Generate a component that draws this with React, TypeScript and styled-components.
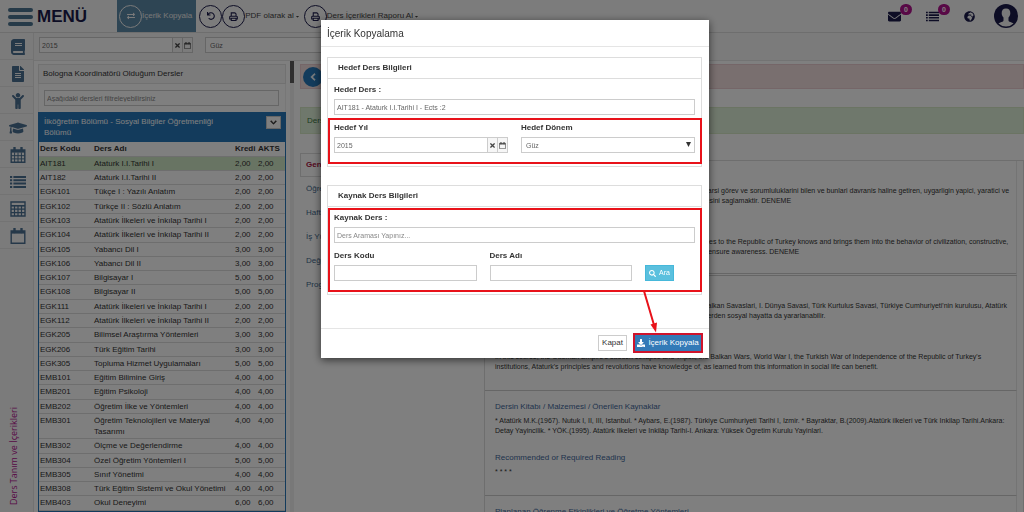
import React from "react";
import styled, { createGlobalStyle, css } from "styled-components";
import {
  FaBook,
  FaCaretDown,
  FaChevronDown,
  FaChevronLeft,
  FaChild,
  FaDownload,
  FaEnvelope,
  FaExchangeAlt,
  FaFileAlt,
  FaGlobeAfrica,
  FaGraduationCap,
  FaSearch,
  FaTimes,
  FaUndo,
} from "react-icons/fa";

const GlobalStyle = createGlobalStyle`
  * { box-sizing: border-box; }
  body {
    margin: 0;
    font-family: "Liberation Sans", Arial, sans-serif;
    font-size: 8px;
    line-height: 10px;
    color: #333;
    background: #fff;
  }
  button, input, select { font: inherit; color: inherit; border-radius: 0; margin: 0; }
  a { color: inherit; text-decoration: none; }
`;

const Shell = styled.div`
  display: flex;
  flex-direction: column;
  height: 100vh;
  overflow: hidden;
`;

/* ---------- top bar ---------- */

const TopBar = styled.header`
  display: flex;
  flex: none;
  align-items: center;
  height: 33px;
  padding: 0 6px 0 8px;
  background: #f9f9f9;
  border-bottom: 1px solid #dcdcdc;
`;

const MenuButton = styled.button`
  display: flex;
  align-items: center;
  gap: 4px;
  width: 109px;
  padding: 2px 0 0;
  border: 0;
  background: none;
  color: #1b1b4b;
  font-size: 17px;
  font-weight: bold;
  line-height: 20px;
`;

const Bars = styled.span`
  display: grid;
  gap: 3px;
  width: 25px;

  i {
    height: 4px;
    border-radius: 2px;
    background: #4d7591;
  }
`;

const ToolButton = styled.button<{ $active?: boolean }>`
  display: flex;
  align-items: center;
  height: 32px;
  padding: 0;
  border: 0;
  background: none;
  color: #444;
  white-space: nowrap;

  ${(p) =>
    p.$active &&
    css`
      padding: 0 4px 0 2px;
      margin-right: 3px;
      background: #5d8aa8;
      color: #eee;
    `}
`;

const Ring = styled.span<{ $light?: boolean }>`
  display: grid;
  place-items: center;
  width: 23px;
  height: 23px;
  border: 1px solid ${(p) => (p.$light ? "#f4f4f4" : "#1b1b4b")};
  border-radius: 50%;
  color: ${(p) => (p.$light ? "#f4f4f4" : "#1b1b4b")};
  font-size: 8px;
`;

const ToolGroup = styled.div`
  display: flex;
  align-items: center;

  & > :nth-child(3) {
    margin-left: 4px;
  }
`;

const Caret = styled(FaCaretDown)`
  font-size: 5px;
  margin-left: 1px;
`;

const Status = styled.nav`
  display: flex;
  align-items: center;
  gap: 19px;
  margin-left: auto;
  color: #1b1b4b;
`;

const StatusIcons = styled.div`
  display: flex;
  align-items: center;
  gap: 25px;
`;

const StatusLink = styled.a`
  position: relative;
  display: flex;
  font-size: 13px;
`;

const Badge = styled.span`
  position: absolute;
  left: 12px;
  top: -6px;
  width: 12px;
  height: 11px;
  border-radius: 6px;
  background: #b0128c;
  color: #fff;
  font-size: 7px;
  font-weight: bold;
  line-height: 11px;
  text-align: center;
`;

/* ---------- side navigation ---------- */

const Body = styled.div`
  display: flex;
  flex: 1;
  min-height: 0;
`;

const Side = styled.nav`
  display: flex;
  flex: none;
  flex-direction: column;
  width: 34px;
  background: #f7f7f7;
  border-right: 1px solid #e4e4e4;
`;

const SideLink = styled.a`
  display: grid;
  place-items: center;
  height: 27px;
  padding: 1px 0 0 3px;
  border-bottom: 1px solid #e6e6e6;
  color: #4b7092;
  font-size: 16px;
`;

const SideCaption = styled.span`
  margin: auto 0 7px 8px;
  writing-mode: vertical-rl;
  transform: rotate(180deg);
  align-self: flex-start;
  color: #b0128c;
  font-family: "Open Sans", sans-serif;
  font-size: 9px;
  line-height: 12px;
  white-space: nowrap;
`;

const Main = styled.div`
  display: flex;
  flex: 1;
  flex-direction: column;
  min-width: 0;
`;

/* ---------- form controls ---------- */

const TextInput = styled.input`
  display: block;
  flex: 1;
  width: 100%;
  min-width: 0;
  height: 16px;
  padding: 0 2px;
  border: 1px solid #ccc;
  background: #fff;
  color: #666;
  font-size: 7px;
  outline: 0;

  &::placeholder {
    color: #888;
    opacity: 1;
  }
`;

const InputRow = styled.div`
  display: flex;
`;

const AddOn = styled.button`
  display: grid;
  place-items: center;
  width: 11px;
  height: 16px;
  padding: 0;
  margin-left: -1px;
  border: 1px solid #ccc;
  background: #f6f6f6;
  color: #444;
  font-size: 7px;
`;

const SelectWrap = styled.span`
  position: relative;
  display: block;
  flex: 1;

  svg {
    position: absolute;
    right: 4px;
    top: 5px;
    pointer-events: none;
  }
`;

const Select = styled.select`
  display: block;
  appearance: none;
  width: 100%;
  height: 16px;
  padding: 1px 4px 0;
  border: 1px solid #ccc;
  background: #fff;
  color: #666;
  font-size: 7px;
`;

const FilterBar = styled.div`
  display: flex;
  flex: none;
  gap: 12px;
  height: 28px;
  padding: 4px 5px;
  background: #f7f7f7;
  border-bottom: 1px solid #e6e6e6;
`;

const FilterCell = styled.div`
  width: 154px;
`;

/* ---------- course list ---------- */

const Columns = styled.div`
  display: flex;
  flex: 1;
  min-height: 0;
  background: #fff;
`;

const ListColumn = styled.section`
  flex: none;
  width: 260px;
  padding: 3px 4px 0 4px;
  border-right: 4px solid #f0f0f0;
  position: relative;
`;

const ScrollThumb = styled.i`
  position: absolute;
  right: -4px;
  top: 0;
  width: 4px;
  height: 22px;
  background: #5e5e5e;
`;

const ListHeading = styled.h2`
  margin: 0;
  padding: 3px 4px 4px;
  border: 1px solid #e2e2e2;
  background: #f7f7f7;
  font-size: 8px;
  font-weight: normal;
  line-height: 11px;
`;

const ListFilter = styled.div`
  padding: 6px 6px 6px 5px;
  border: 1px solid #eee;
  border-width: 0 1px;
`;

const CourseBox = styled.div`
  border: 1px solid #2777b8;
`;

const CourseBoxHead = styled.div`
  display: flex;
  justify-content: space-between;
  align-items: flex-start;
  height: 29px;
  padding: 3px 4px 0 5px;
  background: #2777b8;
  color: #fff;
  line-height: 11px;
`;

const Collapse = styled.button`
  display: grid;
  place-items: center;
  width: 15px;
  height: 13px;
  padding: 0;
  border: 1px solid #ccc;
  background: #fff;
  color: #333;
  font-size: 7px;

  path {
    stroke: currentColor;
    stroke-width: 30px;
  }
`;

const CourseTable = styled.table`
  width: 100%;
  border-collapse: collapse;
  table-layout: fixed;

  th,
  td {
    height: 14px;
    padding: 1px;
    border-bottom: 1px solid #ddd;
    text-align: left;
    vertical-align: top;
    line-height: 11px;
  }
  tbody tr:nth-child(7n + 3) td,
  tbody tr:nth-child(7n + 6) td {
    height: 15px;
  }
  th:nth-child(1) { width: 54px; }
  th:nth-child(3) { width: 23px; }
  th:nth-child(4) { width: 28px; }
  th { white-space: nowrap; }
`;

const CourseRow = styled.tr<{ $selected?: boolean }>`
  background: ${(p) => (p.$selected ? "#d0e9c6" : "transparent")};
`;

/* ---------- course detail ---------- */

const Detail = styled.section`
  flex: 1;
  min-width: 0;
  padding: 3px 0 0 6px;
`;

const Alert = styled.div<{ $tone: "pink" | "green" }>`
  display: flex;
  align-items: center;
  height: ${(p) => (p.$tone === "pink" ? 25 : 27)}px;
  padding: 0 ${(p) => (p.$tone === "pink" ? 2 : 6)}px;
  margin-bottom: ${(p) => (p.$tone === "pink" ? 18 : 19)}px;
  background: ${(p) => (p.$tone === "pink" ? "#f2dede" : "#dff0d8")};
  border: 1px solid ${(p) => (p.$tone === "pink" ? "#ebccd1" : "#d6e9c6")};
  color: #3c763d;
`;

const BackButton = styled.button`
  display: grid;
  place-items: center;
  width: 20px;
  height: 20px;
  padding: 0;
  border: 0;
  border-radius: 50%;
  background: #2777b8;
  color: #fff;
  font-size: 8px;

  path {
    stroke: currentColor;
    stroke-width: 40px;
  }
`;

const DetailGrid = styled.div`
  display: grid;
  grid-template-columns: 176px minmax(0, 1fr);
  gap: 8px;
`;

const Tabs = styled.nav`
  display: flex;
  flex-direction: column;
`;

const Tab = styled.a<{ $active?: boolean }>`
  height: 24px;
  padding: 6px 5px;
  border: 1px solid ${(p) => (p.$active ? "#ddd" : "transparent")};
  color: ${(p) => (p.$active ? "#a8123c" : "#41678a")};
  font-weight: ${(p) => (p.$active ? "bold" : "normal")};
`;

const Sections = styled.div`
  margin-top: 7px;
  padding-right: 6px;
  border: 1px solid #ddd;
  border-bottom: 0;
`;

const TopicBox = styled.article<{ $first?: boolean }>`
  padding: 11px 7px ${(p) => (p.$first ? 16 : 18)}px 10px;
  border-right: 1px solid #e8e8e8;
  border-bottom: ${(p) => (p.$first ? "3px double" : "1px solid")} #ccc;
`;

const TopicTitle = styled.h3`
  margin: 0 0 4px;
  color: #41679a;
  font-size: 8px;
  font-weight: normal;

  p + & {
    margin-top: 17px;
  }
`;

const TopicText = styled.p`
  margin: 0;
  font-size: 7px;
  white-space: nowrap;
`;

/* ---------- dialog ---------- */

const Backdrop = styled.div`
  position: fixed;
  inset: 0;
  display: flex;
  justify-content: center;
  align-items: flex-start;
  padding: 20px 0 0 6px;
  background: rgba(0, 0, 0, 0.5);
`;

const Dialog = styled.div`
  width: 388px;
  background: #fff;
  box-shadow: 0 2px 8px rgba(0, 0, 0, 0.6);
`;

const DialogTitle = styled.h1`
  margin: 0;
  padding: 8px 6px 6px;
  border-bottom: 1px solid #e5e5e5;
  font-size: 10px;
  font-weight: normal;
  line-height: 12px;
`;

const DialogBody = styled.div`
  display: grid;
  gap: 18px;
  padding: 10px 7px 33px 6px;
`;

const Panel = styled.fieldset`
  min-width: 0;
  margin: 0;
  padding: 0;
  border: 1px solid #ddd;
`;

const PanelTitle = styled.h2`
  margin: 0;
  height: 21px;
  padding: 5px 10px;
  border-bottom: 1px solid #ddd;
  font-size: 8px;
  font-weight: bold;
`;

const PanelBody = styled.div`
  display: grid;
  gap: 8px;
  padding: 6px 6px 13px;
`;

const Marked = styled.div`
  position: relative;
  display: grid;
  gap: 8px;
`;

const Marker = styled.span`
  position: absolute;
  inset: -5px -7px -11px -6px;
  border: 2px solid #e8121a;
  pointer-events: none;
`;

const Fields = styled.div<{ $columns: string; $gap: number }>`
  display: grid;
  grid-template-columns: ${(p) => p.$columns};
  column-gap: ${(p) => p.$gap}px;
  align-items: end;
`;

const Label = styled.label`
  display: block;
  margin-bottom: 4px;
  font-weight: bold;
`;

const SearchButton = styled.button`
  display: flex;
  align-items: center;
  justify-content: center;
  gap: 3px;
  width: 29px;
  height: 16px;
  padding: 0;
  border: 1px solid #46b8da;
  background: #5bc0de;
  color: #fff;
  font-size: 7px;
`;

const DialogFooter = styled.footer`
  position: relative;
  display: flex;
  justify-content: flex-end;
  align-items: center;
  gap: 6px;
  height: 30px;
  padding: 0 6px 1px;
  border-top: 1px solid #e5e5e5;
`;

const CloseButton = styled.button`
  width: 29px;
  height: 16px;
  padding: 0;
  border: 1px solid #ccc;
  background: #fff;
`;

const CopyButton = styled.button`
  display: flex;
  align-items: center;
  justify-content: center;
  gap: 3px;
  width: 70px;
  height: 20px;
  padding: 0;
  border: 2px solid #d0142c;
  background: #337ab7;
  color: #fff;
  white-space: nowrap;
`;

const Arrow = styled.svg`
  position: absolute;
  right: 49px;
  bottom: 25px;
`;

/* ---------- drawings ---------- */

const CalendarIcon = ({ size = 16, grid = false }: { size?: number; grid?: boolean }) => (
  <svg width={size} height={size} viewBox="0 0 16 16" fill="none" stroke="currentColor">
    <path d="M1.2 3h13.6v12.2H1.2z" strokeWidth="1.4" />
    <path d="M1 3h14v2.6H1z" fill="currentColor" stroke="none" />
    <path d="M4.5 .6v3.4M11.5 .6v3.4" strokeWidth="2.4" strokeLinecap="round" />
    {grid && <path d="M4.6 5.5v9.5M8 5.5v9.5M11.4 5.5v9.5M1.5 8.7h13M1.5 11.9h13" strokeWidth="1" />}
  </svg>
);

const CalculatorIcon = () => (
  <svg width="16" height="16" viewBox="0 0 16 16" fill="none" stroke="currentColor">
    <path d="M1 1h14v14H1z" strokeWidth="1.4" />
    <path d="M1 4.8h14" strokeWidth="1.6" />
    <path d="M4.5 5v10M8 5v10M11.5 5v10M1 8.2h14M1 11.6h14" strokeWidth="1.2" />
  </svg>
);

const ListIcon = ({ size = 16 }: { size?: number }) => (
  <svg width={size} height={size} viewBox="0 0 16 16" fill="currentColor">
    <path d="M0 2h2.200v2H0zM0 5.300h2.200v2H0zM0 8.600h2.200v2H0zM0 11.900h2.200v2H0z" />
    <path d="M3.400 2H16v2H3.400zM3.400 5.300H16v2H3.400zM3.400 8.600H16v2H3.400zM3.400 11.900H16v2H3.400z" />
  </svg>
);

const PrintIcon = () => (
  <svg width="9" height="9" viewBox="0 0 16 16">
    <path
      d="M4 8V1.500h6.500L12.500 3.500V8M3.500 12.500H1.200V9.200Q1.200 7.700 2.700 7.700h10.600q1.500 0 1.500 1.500v3.300h-2.300M4 11h8.500v4H4z"
      fill="none"
      stroke="currentColor"
      strokeWidth="1.900"
    />
  </svg>
);

const Avatar = () => (
  <svg width="24" height="24" viewBox="0 0 24 24">
    <circle cx="12" cy="12" r="12" fill="#1b1b4b" />
    <path
      d="M12 4.600c-3 0-4.500 2-4.300 4.900.1 1.800.9 3.100 1.800 4.100v3c0 1.500-3.300 1.600-5 3A10.600 10.600 0 0 0 12 22.600a10.600 10.600 0 0 0 7.500-3c-1.700-1.400-5-1.500-5-3v-3c.9-1 1.700-2.300 1.800-4.100.2-2.900-1.300-4.900-4.300-4.900z"
      fill="#f4f4f4"
    />
  </svg>
);

const DropArrow = () => (
  <svg width="5" height="5" viewBox="0 0 5 5">
    <path d="M0 0h5L2.500 5z" fill="#333" />
  </svg>
);

/* ---------- data ---------- */

const courses: [string, string, string][] = [
  ["AIT181", "Ataturk I.I.Tarihi I", "2,00"],
  ["AIT182", "Ataturk I.I.Tarihi II", "2,00"],
  ["EGK101", "Tükçe I : Yazılı Anlatım", "2,00"],
  ["EGK102", "Türkçe II : Sözlü Anlatım", "2,00"],
  ["EGK103", "Atatürk İlkeleri ve İnkılap Tarihi I", "2,00"],
  ["EGK104", "Atatürk İlkeleri ve İnkılap Tarihi II", "2,00"],
  ["EGK105", "Yabancı Dil I", "3,00"],
  ["EGK106", "Yabancı Dil II", "3,00"],
  ["EGK107", "Bilgisayar I", "5,00"],
  ["EGK108", "Bilgisayar II", "5,00"],
  ["EGK111", "Atatürk İlkeleri ve İnkılap Tarihi I", "2,00"],
  ["EGK112", "Atatürk İlkeleri ve İnkılap Tarihi II", "2,00"],
  ["EGK205", "Bilimsel Araştırma Yöntemleri", "3,00"],
  ["EGK206", "Türk Eğitim Tarihi", "3,00"],
  ["EGK305", "Topluma Hizmet Uygulamaları", "5,00"],
  ["EMB101", "Eğitim Bilimine Giriş", "4,00"],
  ["EMB201", "Eğitim Psikoloji", "4,00"],
  ["EMB202", "Öğretim İlke ve Yöntemleri", "4,00"],
  ["EMB301", "Öğretim Teknolojileri ve Materyal Tasarımı", "4,00"],
  ["EMB302", "Ölçme ve Değerlendirme", "4,00"],
  ["EMB304", "Özel Öğretim Yöntemleri I", "5,00"],
  ["EMB305", "Sınıf Yönetimi", "4,00"],
  ["EMB308", "Türk Eğitim Sistemi ve Okul Yönetimi", "4,00"],
  ["EMB403", "Okul Deneyimi", "6,00"],
];

const tabs = ["Genel Bilgiler", "Öğrenme Çıktıları", "Haftalık İçerik", "İş Yükü", "Değerlendirme", "Program Çıktıları"];

const topics: { title: string; lines: string[] }[][] = [
  [
    {
      title: "Dersin Amacı",
      lines: [
        "Atatürk ilke ve inkilaplarina bagli, gönülden, Türkiye Cumhuriyeti'ne karsi görev ve sorumluluklarini bilen ve bunlari davranis haline getiren, uygarligin yapici, yaratici ve",
        "seçkin ve güçlü bir ortagi olarak yetisen ögrencilerin bu bilinci edinmesini saglamaktir. DENEME",
      ],
    },
    {
      title: "Course Objectives",
      lines: [
        "Faithful to the principles of Ataturk, who have duties and responsibilities to the Republic of Turkey knows and brings them into the behavior of civilization, constructive,",
        "creative and distinguished partners of successful students, to further ensure awareness. DENEME",
      ],
    },
  ],
  [
    {
      title: "Dersin İçeriği",
      lines: [
        "Bu derste Osmanli Devleti'nin son dönemi, çöküsü, Trablusgarp ve Balkan Savaslari, I. Dünya Savasi, Türk Kurtulus Savasi, Türkiye Cumhuriyeti'nin kurulusu, Atatürk",
        "ilke ve inkilaplari hakkinda bilgi sahibi olur, her zaman ögrendigi bilgilerden sosyal hayatta da yararlanabilir.",
      ],
    },
    {
      title: "Course Content",
      lines: [
        "In this course, the Ottoman Empire's sudden collapse and Tripoli, the Balkan Wars, World War I, the Turkish War of Independence of the Republic of Turkey's",
        "institutions, Ataturk's principles and revolutions have knowledge of, as learned from this information in social life can benefit.",
      ],
    },
  ],
  [
    {
      title: "Dersin Kitabı / Malzemesi / Önerilen Kaynaklar",
      lines: [
        "* Atatürk M.K.(1967). Nutuk I, II, III, Istanbul. * Aybars, E.(1987). Türkiye Cumhuriyeti Tarihi I, Izmir. * Bayraktar, B.(2009).Atatürk ilkeleri ve Türk Inkilap Tarihi.Ankara:",
        "Detay Yayincilik. * YÖK.(1995). Atatürk Ilkeleri ve Inkilâp Tarihi-I. Ankara: Yüksek Ögretim Kurulu Yayinlari.",
      ],
    },
    { title: "Recommended or Required Reading", lines: ["* * * *"] },
  ],
  [{ title: "Planlanan Öğrenme Etkinlikleri ve Öğretme Yöntemleri", lines: [] }],
];

const sideItems: [string, React.ReactNode][] = [
  ["Dersler", <FaBook />],
  ["Belgeler", <FaFileAlt />],
  ["Öğrenci", <FaChild />],
  ["Mezuniyet", <FaGraduationCap size={18} />],
  ["Takvim", <CalendarIcon grid />],
  ["Liste", <ListIcon />],
  ["Hesaplama", <CalculatorIcon />],
  ["Program", <CalendarIcon />],
];

const YearField = ({ id, label }: { id: string; label?: string }) => (
  <InputRow>
    <TextInput id={id} aria-label={label} defaultValue="2015" />
    <AddOn aria-label="Temizle"><FaTimes /></AddOn>
    <AddOn aria-label="Takvim"><CalendarIcon size={7} /></AddOn>
  </InputRow>
);

const TermField = ({ id, label, arrow }: { id: string; label?: string; arrow?: boolean }) => (
  <SelectWrap>
    <Select id={id} aria-label={label} defaultValue="Güz">
      <option>Güz</option>
      <option>Bahar</option>
    </Select>
    {arrow && <DropArrow />}
  </SelectWrap>
);

export default function App() {
  return (
    <>
      <GlobalStyle />
      <Shell>
        <TopBar>
          <MenuButton>
            <Bars><i /><i /><i /></Bars>
            MENÜ
          </MenuButton>
          <ToolButton $active>
            <Ring $light><FaExchangeAlt /></Ring>
            İçerik Kopyala
          </ToolButton>
          <ToolGroup>
            <ToolButton aria-label="Geri al"><Ring><FaUndo /></Ring></ToolButton>
            <ToolButton><Ring><PrintIcon /></Ring>PDF olarak al<Caret /></ToolButton>
            <ToolButton><Ring><PrintIcon /></Ring>Ders İçerikleri Raporu Al<Caret /></ToolButton>
          </ToolGroup>
          <Status>
            <StatusIcons>
              <StatusLink href="#" aria-label="Mesajlar"><FaEnvelope /><Badge>0</Badge></StatusLink>
              <StatusLink href="#" aria-label="Görevler"><ListIcon size={13} /><Badge>0</Badge></StatusLink>
              <StatusLink href="#" aria-label="Dil"><FaGlobeAfrica size={11} /></StatusLink>
            </StatusIcons>
            <StatusLink href="#" aria-label="Profil"><Avatar /></StatusLink>
          </Status>
        </TopBar>

        <Body>
          <Side>
            {sideItems.map(([name, icon]) => (
              <SideLink key={name} href="#" aria-label={name}>{icon}</SideLink>
            ))}
            <SideCaption>Ders Tanım ve İçerikleri</SideCaption>
          </Side>

          <Main>
            <FilterBar>
              <FilterCell><YearField id="filter-year" label="Yıl" /></FilterCell>
              <FilterCell><TermField id="filter-term" label="Dönem" /></FilterCell>
            </FilterBar>

            <Columns>
              <ListColumn>
                <ScrollThumb />
                <ListHeading>Bologna Koordinatörü Olduğum Dersler</ListHeading>
                <ListFilter>
                  <TextInput aria-label="Ders filtresi" placeholder="Aşağıdaki dersleri filtreleyebilirsiniz" />
                </ListFilter>
                <CourseBox>
                  <CourseBoxHead>
                    <span>
                      İlköğretim Bölümü - Sosyal Bilgiler Öğretmenliği
                      <br />
                      Bölümü
                    </span>
                    <Collapse aria-label="Daralt"><FaChevronDown /></Collapse>
                  </CourseBoxHead>
                  <CourseTable>
                    <thead>
                      <tr><th>Ders Kodu</th><th>Ders Adı</th><th>Kredi</th><th>AKTS</th></tr>
                    </thead>
                    <tbody>
                      {courses.map(([code, name, credit], i) => (
                        <CourseRow key={code} $selected={i === 0}>
                          <td>{code}</td>
                          <td>{name}</td>
                          <td>{credit}</td>
                          <td>{credit}</td>
                        </CourseRow>
                      ))}
                    </tbody>
                  </CourseTable>
                </CourseBox>
              </ListColumn>

              <Detail>
                <Alert $tone="pink"><BackButton aria-label="Geri"><FaChevronLeft /></BackButton></Alert>
                <Alert $tone="green">Ders Bilgileri</Alert>
                <DetailGrid>
                  <Tabs>
                    {tabs.map((t, i) => (
                      <Tab key={t} href="#" $active={i === 0}>{t}</Tab>
                    ))}
                  </Tabs>
                  <Sections>
                    {topics.map((group, i) => (
                      <TopicBox key={i} $first={i === 0}>
                        {group.map((topic) => (
                          <React.Fragment key={topic.title}>
                            <TopicTitle>{topic.title}</TopicTitle>
                            <TopicText>
                              {topic.lines.map((line) => (
                                <React.Fragment key={line}>{line}<br /></React.Fragment>
                              ))}
                            </TopicText>
                          </React.Fragment>
                        ))}
                      </TopicBox>
                    ))}
                  </Sections>
                </DetailGrid>
              </Detail>
            </Columns>
          </Main>
        </Body>
      </Shell>

      <Backdrop>
        <Dialog role="dialog" aria-labelledby="dialog-title">
          <DialogTitle id="dialog-title">İçerik Kopyalama</DialogTitle>
          <DialogBody>
            <Panel>
              <PanelTitle>Hedef Ders Bilgileri</PanelTitle>
              <PanelBody>
                <div>
                  <Label htmlFor="target-course">Hedef Ders :</Label>
                  <TextInput id="target-course" defaultValue="AIT181 - Ataturk I.I.Tarihi I - Ects :2" />
                </div>
                <Marked>
                  <Fields $columns="1fr 1fr" $gap={13}>
                    <div>
                      <Label htmlFor="target-year">Hedef Yıl</Label>
                      <YearField id="target-year" />
                    </div>
                    <div>
                      <Label htmlFor="target-term">Hedef Dönem</Label>
                      <TermField id="target-term" arrow />
                    </div>
                  </Fields>
                  <Marker />
                </Marked>
              </PanelBody>
            </Panel>

            <Panel>
              <PanelTitle>Kaynak Ders Bilgileri</PanelTitle>
              <PanelBody>
                <Marked>
                  <div>
                    <Label htmlFor="source-course">Kaynak Ders :</Label>
                    <TextInput id="source-course" placeholder="Ders Araması Yapınız..." />
                  </div>
                  <Fields $columns="1fr 1fr 50px" $gap={13}>
                    <div>
                      <Label htmlFor="source-code">Ders Kodu</Label>
                      <TextInput id="source-code" />
                    </div>
                    <div>
                      <Label htmlFor="source-name">Ders Adı</Label>
                      <TextInput id="source-name" />
                    </div>
                    <SearchButton><FaSearch />Ara</SearchButton>
                  </Fields>
                  <Marker />
                </Marked>
              </PanelBody>
            </Panel>
          </DialogBody>
          <DialogFooter>
            <CloseButton>Kapat</CloseButton>
            <CopyButton><FaDownload />İçerik Kopyala</CopyButton>
            <Arrow width="18" height="42" viewBox="0 0 18 42" aria-hidden="true">
              <path d="M2 0L12 34" stroke="#e8121a" strokeWidth="2" />
              <path d="M8.500 33.500L15 31.500L14 41.500z" fill="#e8121a" />
            </Arrow>
          </DialogFooter>
        </Dialog>
      </Backdrop>
    </>
  );
}
